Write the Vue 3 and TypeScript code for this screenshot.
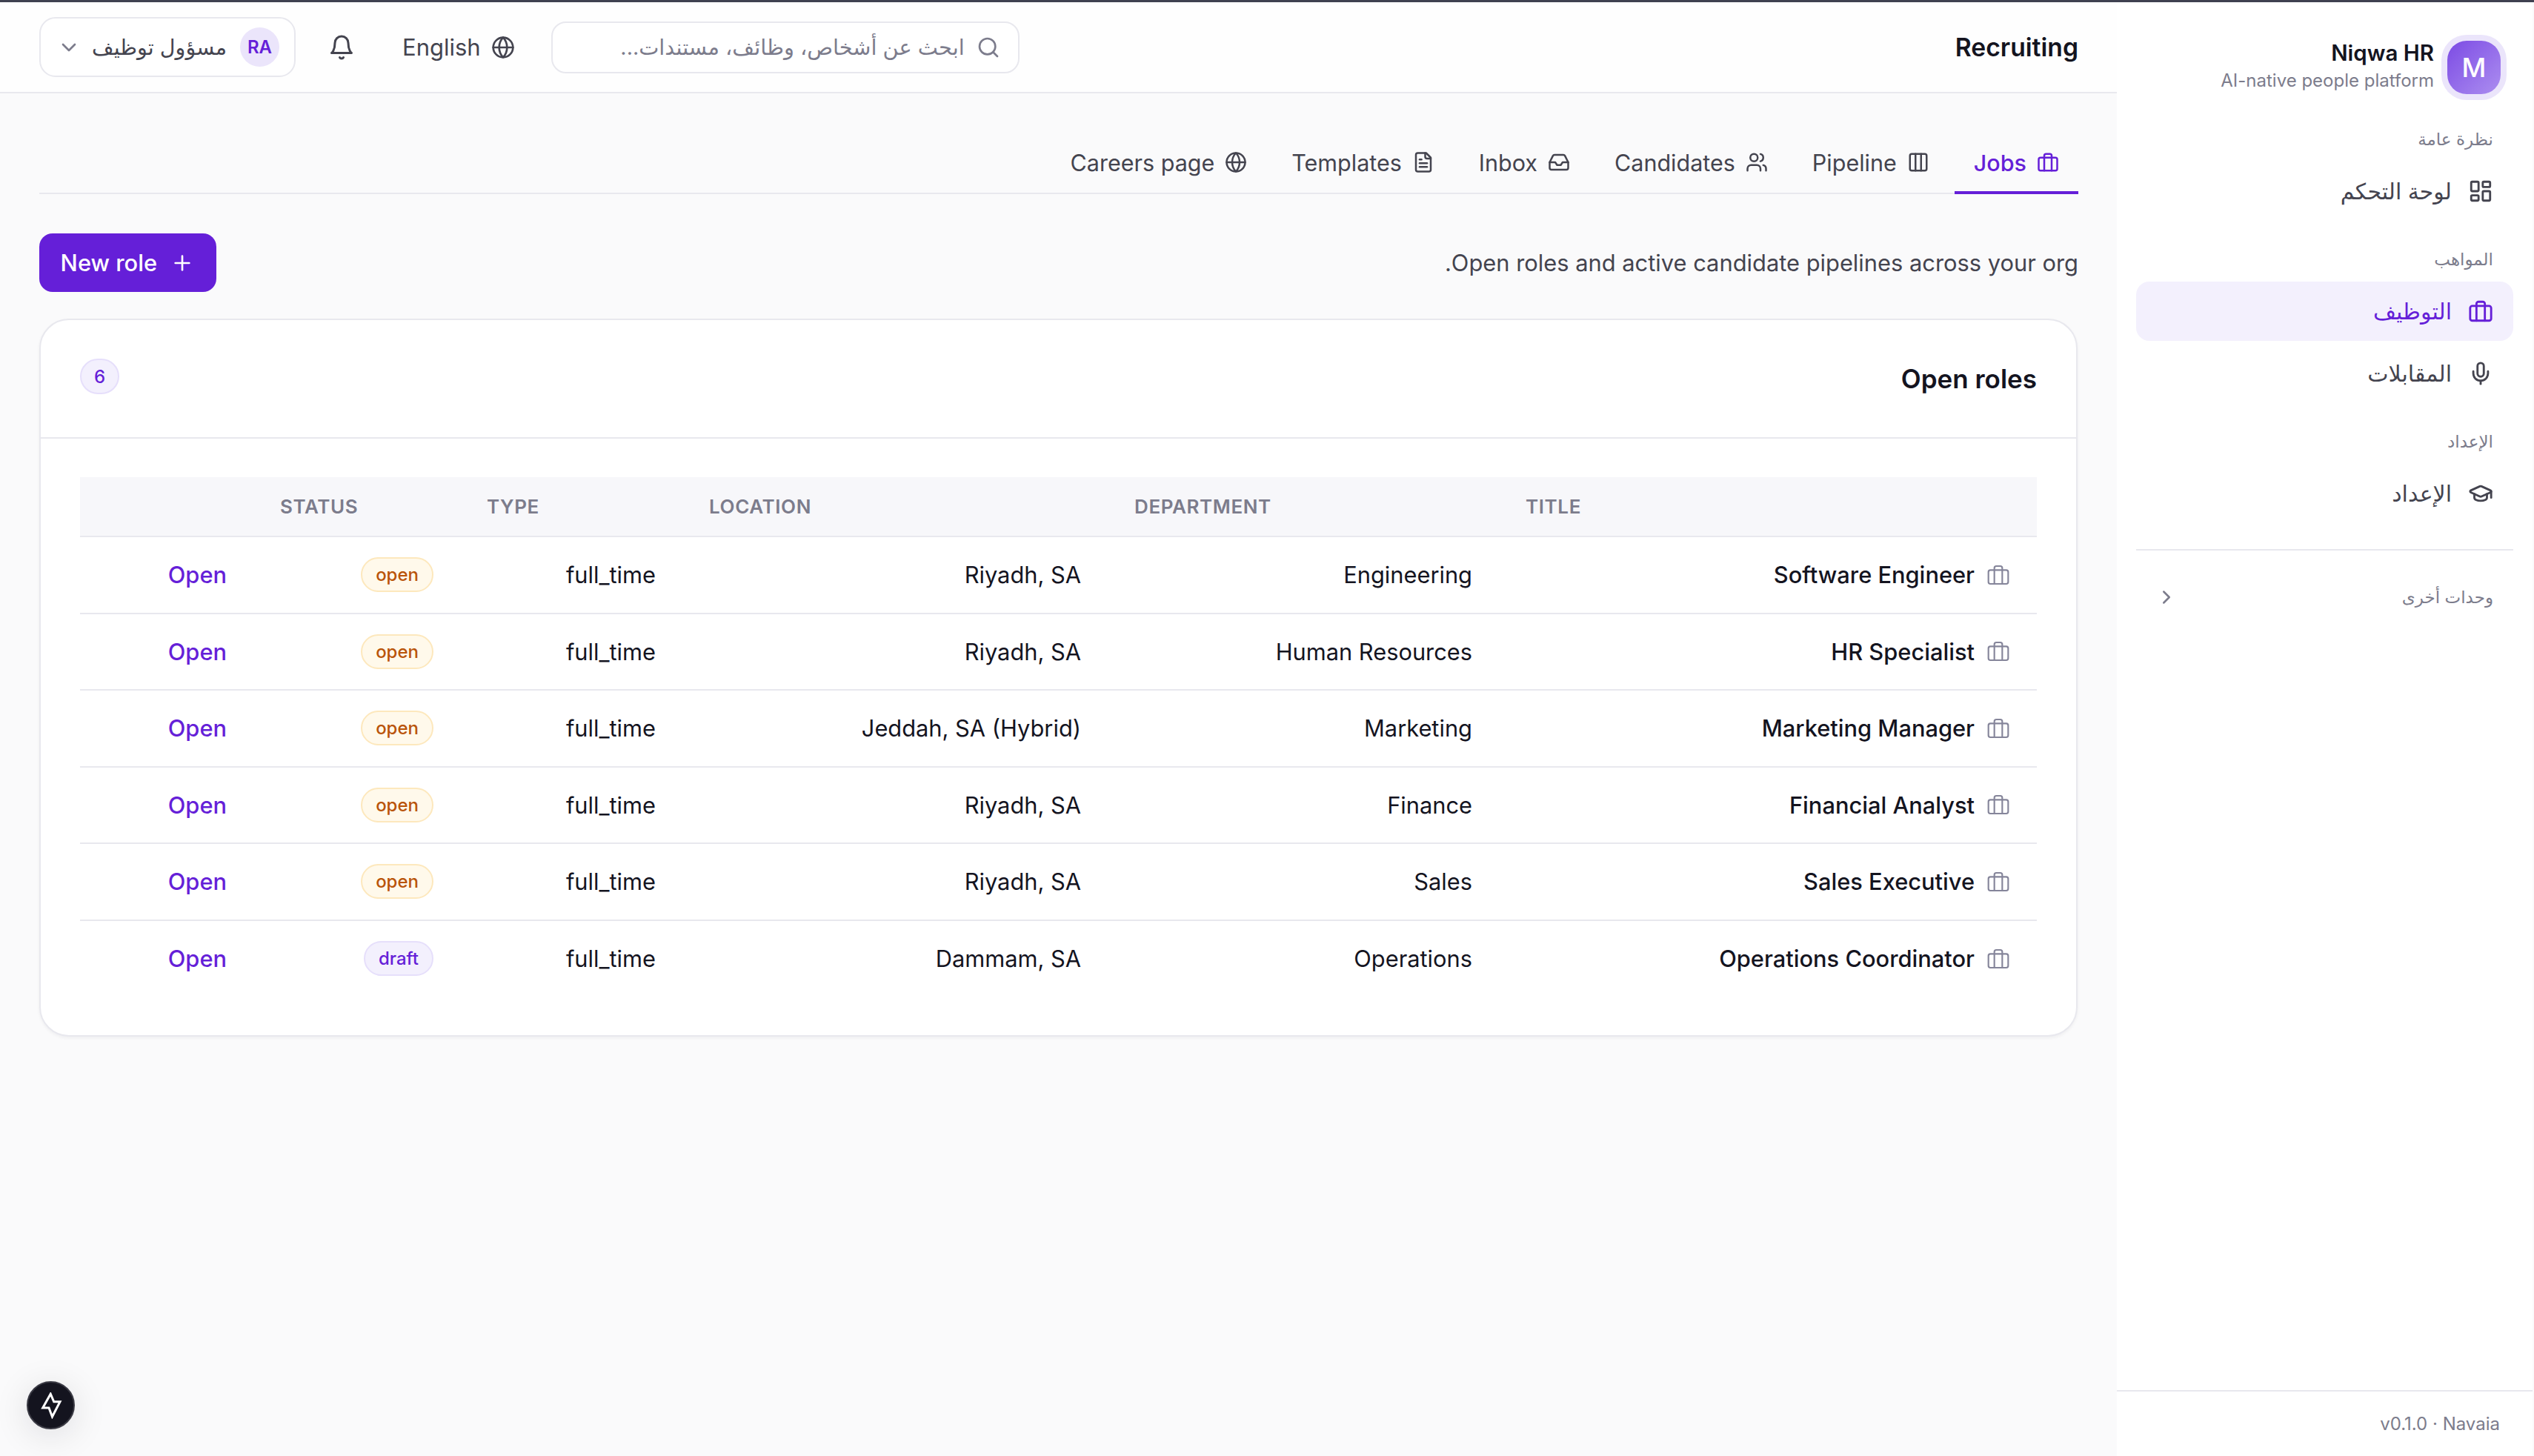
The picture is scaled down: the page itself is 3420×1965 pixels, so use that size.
<script setup lang="ts">
import { h } from "vue";

const paths: Record<string, string[]> = {
  dashboard: [
    "M4 3h5a1 1 0 0 1 1 1v7a1 1 0 0 1-1 1H4a1 1 0 0 1-1-1V4a1 1 0 0 1 1-1z",
    "M15 3h5a1 1 0 0 1 1 1v3a1 1 0 0 1-1 1h-5a1 1 0 0 1-1-1V4a1 1 0 0 1 1-1z",
    "M15 12h5a1 1 0 0 1 1 1v7a1 1 0 0 1-1 1h-5a1 1 0 0 1-1-1v-7a1 1 0 0 1 1-1z",
    "M4 16h5a1 1 0 0 1 1 1v3a1 1 0 0 1-1 1H4a1 1 0 0 1-1-1v-3a1 1 0 0 1 1-1z",
  ],
  briefcase: [
    "M4 7h16a2 2 0 0 1 2 2v10a2 2 0 0 1-2 2H4a2 2 0 0 1-2-2V9a2 2 0 0 1 2-2z",
    "M16 21V5a2 2 0 0 0-2-2h-4a2 2 0 0 0-2 2v16",
  ],
  mic: [
    "M12 2a3 3 0 0 0-3 3v7a3 3 0 0 0 6 0V5a3 3 0 0 0-3-3Z",
    "M19 10v2a7 7 0 0 1-14 0v-2",
    "M12 19v3",
  ],
  cap: [
    "M21.42 10.922a1 1 0 0 0-.019-1.838L12.83 5.18a2 2 0 0 0-1.66 0L2.6 9.08a1 1 0 0 0 0 1.832l8.57 3.908a2 2 0 0 0 1.66 0z",
    "M22 10v6",
    "M6 12.5V16a6 3 0 0 0 12 0v-3.5",
  ],
  right: ["m9 18 6-6-6-6"],
  down: ["m6 9 6 6 6-6"],
  bell: ["M6 8a6 6 0 0 1 12 0c0 7 3 9 3 9H3s3-2 3-9", "M10.3 21a1.94 1.94 0 0 0 3.4 0"],
  globe: [
    "M22 12a10 10 0 1 1-20 0 10 10 0 0 1 20 0z",
    "M12 2a14.5 14.5 0 0 0 0 20 14.5 14.5 0 0 0 0-20",
    "M2 12h20",
  ],
  search: ["M19 11a8 8 0 1 1-16 0 8 8 0 0 1 16 0z", "m21 21-4.3-4.3"],
  file: [
    "M15 2H6a2 2 0 0 0-2 2v16a2 2 0 0 0 2 2h12a2 2 0 0 0 2-2V7Z",
    "M14 2v4a2 2 0 0 0 2 2h4",
    "M10 9H8",
    "M16 13H8",
    "M16 17H8",
  ],
  inbox: [
    "M22 12h-6l-2 3h-4l-2-3H2",
    "M5.45 5.11 2 12v6a2 2 0 0 0 2 2h16a2 2 0 0 0 2-2v-6l-3.45-6.89A2 2 0 0 0 16.76 4H7.24a2 2 0 0 0-1.79 1.11z",
  ],
  users: [
    "M16 21v-2a4 4 0 0 0-4-4H6a4 4 0 0 0-4 4v2",
    "M13 7a4 4 0 1 1-8 0 4 4 0 0 1 8 0z",
    "M22 21v-2a4 4 0 0 0-3-3.87",
    "M16 3.13a4 4 0 0 1 0 7.75",
  ],
  columns: [
    "M5 3h14a2 2 0 0 1 2 2v14a2 2 0 0 1-2 2H5a2 2 0 0 1-2-2V5a2 2 0 0 1 2-2z",
    "M9 3v18",
    "M15 3v18",
  ],
  plus: ["M5 12h14", "M12 5v14"],
  zap: ["M11.5 1.5 4.5 14h5.5l3 8 7-13.5h-5.5z"],
};

const Icon = (props: { name: string }) =>
  h(
    "svg",
    {
      viewBox: "0 0 24 24",
      fill: "none",
      stroke: "currentColor",
      "stroke-width": 2,
      "stroke-linecap": "round",
      "stroke-linejoin": "round",
    },
    paths[props.name].map((d) => h("path", { d })),
  );
Icon.props = ["name"];

const navGroups = [
  { label: "نظرة عامة", items: [{ name: "لوحة التحكم", icon: "dashboard" }] },
  {
    label: "المواهب",
    items: [
      { name: "التوظيف", icon: "briefcase", active: true },
      { name: "المقابلات", icon: "mic" },
    ],
  },
  { label: "الإعداد", items: [{ name: "الإعداد", icon: "cap" }] },
];

const tabs = [
  { name: "Jobs", icon: "briefcase", active: true },
  { name: "Pipeline", icon: "columns" },
  { name: "Candidates", icon: "users" },
  { name: "Inbox", icon: "inbox" },
  { name: "Templates", icon: "file" },
  { name: "Careers page", icon: "globe" },
];

const roles = [
  { title: "Software Engineer", dept: "Engineering", loc: "Riyadh, SA", status: "open" },
  { title: "HR Specialist", dept: "Human Resources", loc: "Riyadh, SA", status: "open" },
  { title: "Marketing Manager", dept: "Marketing", loc: "Jeddah, SA (Hybrid)", status: "open" },
  { title: "Financial Analyst", dept: "Finance", loc: "Riyadh, SA", status: "open" },
  { title: "Sales Executive", dept: "Sales", loc: "Riyadh, SA", status: "open" },
  { title: "Operations Coordinator", dept: "Operations", loc: "Dammam, SA", status: "draft" },
];
</script>

<template>
  <div class="app" dir="rtl">
    <aside class="sidebar">
      <div class="brand">
        <div class="logo">M</div>
        <div class="brand-text">
          <div class="brand-name">Niqwa HR</div>
          <div class="brand-sub">AI-native people platform</div>
        </div>
      </div>

      <nav class="nav">
        <section v-for="g in navGroups" :key="g.label" class="group">
          <div class="group-label">{{ g.label }}</div>
          <a v-for="it in g.items" :key="it.name" class="item" :class="{ active: it.active }">
            <Icon :name="it.icon" class="item-icon" />
            <span>{{ it.name }}</span>
          </a>
        </section>
      </nav>

      <div class="more">
        <span>وحدات أخرى</span>
        <Icon name="right" class="more-icon" />
      </div>

      <footer class="side-foot">v0.1.0 · Navaia</footer>
    </aside>

    <div class="main">
      <header class="topbar">
        <div class="page-title">Recruiting</div>
        <div class="top-actions">
          <div class="search">
            <Icon name="search" class="search-icon" />
            <span>ابحث عن أشخاص، وظائف، مستندات...</span>
          </div>
          <button class="lang">
            <Icon name="globe" class="lang-icon" />
            <span>English</span>
          </button>
          <button class="bell"><Icon name="bell" /></button>
          <button class="role">
            <span class="avatar">RA</span>
            <span class="role-name">مسؤول توظيف</span>
            <Icon name="down" class="role-chev" />
          </button>
        </div>
      </header>

      <main class="content">
        <div class="tabs">
          <a v-for="t in tabs" :key="t.name" class="tab" :class="{ active: t.active }">
            <Icon :name="t.icon" class="tab-icon" />
            <span>{{ t.name }}</span>
          </a>
        </div>

        <div class="intro">
          <p class="desc">Open roles and active candidate pipelines across your org.</p>
          <button class="new-role">
            <Icon name="plus" class="plus" />
            <span>New role</span>
          </button>
        </div>

        <div class="card">
          <div class="card-head">
            <h2>Open roles</h2>
            <span class="count">6</span>
          </div>
          <div class="card-body">
            <table>
              <colgroup>
                <col class="c-title" />
                <col class="c-dept" />
                <col class="c-loc" />
                <col class="c-type" />
                <col class="c-status" />
                <col class="c-action" />
              </colgroup>
              <thead>
                <tr>
                  <th>Title</th>
                  <th>Department</th>
                  <th>Location</th>
                  <th>Type</th>
                  <th>Status</th>
                  <th></th>
                </tr>
              </thead>
              <tbody>
                <tr v-for="r in roles" :key="r.title">
                  <td class="t-title">
                    <div class="title-cell">
                      <Icon name="briefcase" class="row-icon" />
                      <span>{{ r.title }}</span>
                    </div>
                  </td>
                  <td>{{ r.dept }}</td>
                  <td>{{ r.loc }}</td>
                  <td>full_time</td>
                  <td>
                    <span class="pill" :class="r.status">{{ r.status }}</span>
                  </td>
                  <td><a class="open-link">Open</a></td>
                </tr>
              </tbody>
            </table>
          </div>
        </div>
      </main>
    </div>

    <button class="fab"><Icon name="zap" /></button>
  </div>
</template>

<style>
html,
body {
  margin: 0;
  background: #fafafb;
}
</style>

<style scoped>
.app {
  position: relative;
  display: flex;
  height: 1965px;
  box-sizing: border-box;
  overflow: hidden;
  border-top: 3px solid #3f4150;
  padding-right: 2px;
  background: #fafafb;
  color: #14141f;
  font-family: Inter, "DejaVu Sans", sans-serif;
}
button {
  font: inherit;
  border: none;
  background: none;
  padding: 0;
  color: inherit;
}
svg {
  display: block;
  flex: none;
}

/* sidebar */
.sidebar {
  width: 561px;
  flex: none;
  display: flex;
  flex-direction: column;
  background: #fff;
}
.brand {
  display: flex;
  align-items: center;
  gap: 18px;
  padding: 48px 43px 0 0;
  height: 80px;
}
.logo {
  width: 72px;
  height: 72px;
  border-radius: 26px;
  background: linear-gradient(135deg, #7c4be4, #ac8ef0);
  box-shadow: 0 0 0 8px #ebe5fb;
  color: #fff;
  font-size: 36px;
  font-weight: 500;
  display: flex;
  align-items: center;
  justify-content: center;
}
.brand-text {
  margin-top: -5px;
}
.brand-name {
  font-size: 29.5px;
  font-weight: 600;
  line-height: 38px;
}
.brand-sub {
  font-size: 24px;
  line-height: 34px;
  color: #7c7c8c;
  margin-top: 2px;
}
.nav {
  margin-top: 41px;
  padding: 0 26px;
  display: flex;
  flex-direction: column;
  gap: 36px;
}
.group {
  display: flex;
  flex-direction: column;
  gap: 4px;
}
.group-label {
  padding-right: 27px;
  font-size: 23px;
  line-height: 32px;
  color: #7c7c8c;
  margin-bottom: 10px;
}
.item {
  height: 80px;
  display: flex;
  align-items: center;
  gap: 22px;
  padding-right: 27px;
  border-radius: 18px;
  font-size: 30px;
  color: #44444f;
}
.item.active {
  background: #f3f0fd;
  color: #651fd8;
  font-weight: 500;
}
.item-icon {
  width: 34px;
  height: 34px;
}
.more {
  margin: 35px 26px 0;
  padding: 47px 27px 0 26px;
  border-top: 2px solid #e8e8ee;
  display: flex;
  justify-content: space-between;
  align-items: center;
  font-size: 23px;
  line-height: 32px;
  color: #7c7c8c;
}
.more-icon {
  width: 30px;
  height: 30px;
}
.side-foot {
  margin-top: auto;
  height: 87px;
  border-top: 2px solid #e8e8ee;
  display: flex;
  align-items: center;
  padding-right: 44px;
  font-size: 24px;
  color: #7c7c8c;
}

/* top bar */
.main {
  flex: 1;
  min-width: 0;
  display: flex;
  flex-direction: column;
}
.topbar {
  height: 121px;
  flex: none;
  display: flex;
  justify-content: space-between;
  align-items: center;
  padding: 0 52px 0 53px;
  background: #fefefe;
  border-bottom: 2px solid #e8e8ee;
}
.page-title {
  font-size: 33.7px;
  font-weight: 600;
}
.top-actions {
  display: flex;
  align-items: center;
}
.search {
  width: 632px;
  height: 70px;
  box-sizing: border-box;
  display: flex;
  align-items: center;
  gap: 16px;
  padding-right: 24px;
  border: 2px solid #e8e8ee;
  border-radius: 20px;
  background: #fff;
  font-size: 28.8px;
  color: #7c7c8c;
}
.search-icon {
  width: 32px;
  height: 32px;
}
.lang {
  display: flex;
  align-items: center;
  gap: 14px;
  margin-right: 49px;
  font-size: 31px;
  color: #44444f;
}
.lang-icon {
  width: 32px;
  height: 32px;
}
.bell {
  margin-right: 64px;
  color: #44444f;
}
.bell svg {
  width: 36px;
  height: 36px;
}
.role {
  margin-right: 44px;
  width: 346px;
  height: 81px;
  box-sizing: border-box;
  display: flex;
  align-items: center;
  padding: 0 20px 0 22px;
  border: 2px solid #e8e8ee;
  border-radius: 22px;
  background: #fff;
  color: #44444f;
}
.avatar {
  width: 53px;
  height: 53px;
  border-radius: 50%;
  background: #ebe5fb;
  color: #651fd8;
  font-size: 24px;
  font-weight: 600;
  display: flex;
  align-items: center;
  justify-content: center;
  flex: none;
}
.role-name {
  margin-right: 18px;
  font-size: 28.6px;
}
.role-chev {
  margin-right: auto;
  width: 32px;
  height: 32px;
  color: #7c7c8c;
}

/* page */
.content {
  padding: 54px 52px 0 53px;
}
.tabs {
  display: flex;
  gap: 8px;
  border-bottom: 2px solid #e8e8ee;
}
.tab {
  height: 82px;
  box-sizing: border-box;
  display: flex;
  align-items: center;
  gap: 14px;
  padding: 0 26px 4px;
  margin-bottom: -2px;
  font-size: 30.5px;
  color: #44444f;
}
.tab.active {
  color: #651fd8;
  font-weight: 500;
  border-bottom: 4px solid #651fd8;
  padding-bottom: 0;
}
.tab-icon {
  width: 30px;
  height: 30px;
}
.intro {
  margin-top: 53px;
  display: flex;
  justify-content: space-between;
  align-items: center;
}
.desc {
  margin: 0;
  font-size: 30.85px;
  color: #44444f;
}
.new-role {
  width: 239px;
  height: 79px;
  box-sizing: border-box;
  display: flex;
  align-items: center;
  gap: 18px;
  padding-right: 30px;
  border-radius: 18px;
  background: #651fd8;
  color: #fff;
  font-size: 30.8px;
  font-weight: 500;
}
.plus {
  width: 32px;
  height: 32px;
}

/* card */
.card {
  margin-top: 36px;
  margin-right: 1px;
  border: 2px solid #e8e8ee;
  border-radius: 40px;
  background: #fff;
  box-shadow: 0 2px 4px rgba(20, 20, 31, 0.05);
}
.card-head {
  height: 158px;
  display: flex;
  justify-content: space-between;
  align-items: center;
  padding: 0 53px;
  border-bottom: 2px solid #e8e8ee;
}
.card-head h2 {
  margin: 0;
  font-size: 35px;
  font-weight: 600;
}
.count {
  min-width: 53px;
  height: 48px;
  box-sizing: border-box;
  margin-top: -6px;
  border: 2px solid #e6dffb;
  border-radius: 24px;
  background: #f3f0fd;
  color: #651fd8;
  font-size: 24px;
  font-weight: 500;
  display: flex;
  align-items: center;
  justify-content: center;
}
.card-body {
  padding: 52px 53px 52px;
}
table {
  width: 100%;
  table-layout: fixed;
  border-collapse: collapse;
}
.c-title { width: 726px; }
.c-dept { width: 528px; }
.c-loc { width: 574px; }
.c-type { width: 300px; }
.c-status { width: 279px; }
.c-action { width: 234px; }
th {
  height: 80px;
  padding: 0 36px;
  box-sizing: border-box;
  background: #f7f7fa;
  border-bottom: 2px solid #e8e8ee;
  text-align: left;
  font-size: 26px;
  font-weight: 600;
  letter-spacing: 0.6px;
  text-transform: uppercase;
  color: #7c7c8c;
}
td {
  height: 103.5px;
  padding: 0 36px;
  box-sizing: border-box;
  border-bottom: 2px solid #e8e8ee;
  font-size: 30.8px;
}
tbody tr:last-child td {
  border-bottom: none;
}
.t-title {
  font-weight: 500;
}
.title-cell {
  display: flex;
  align-items: center;
  gap: 16px;
}
.row-icon {
  width: 32px;
  height: 32px;
  stroke-width: 1.6;
  color: #85859a;
}
.pill {
  display: inline-flex;
  align-items: center;
  justify-content: center;
  height: 47px;
  padding: 0 18px;
  box-sizing: border-box;
  border-radius: 24px;
  font-size: 24px;
  font-weight: 500;
}
.pill.open {
  background: #fff9eb;
  border: 2px solid #fde8bd;
  color: #b9540a;
}
.pill.draft {
  background: #f3f0fd;
  border: 2px solid #e6dffb;
  color: #651fd8;
}
.open-link {
  color: #651fd8;
  font-weight: 500;
}

.fab {
  position: absolute;
  left: 36px;
  bottom: 36px;
  width: 65px;
  height: 65px;
  box-sizing: border-box;
  border-radius: 50%;
  border: 2px solid #3a3a44;
  background: #14141f;
  color: #fff;
  display: flex;
  align-items: center;
  justify-content: center;
  box-shadow: 0 8px 48px rgba(20, 20, 31, 0.12);
}
.fab svg {
  width: 36px;
  height: 36px;
  stroke-linejoin: miter;
}
</style>
